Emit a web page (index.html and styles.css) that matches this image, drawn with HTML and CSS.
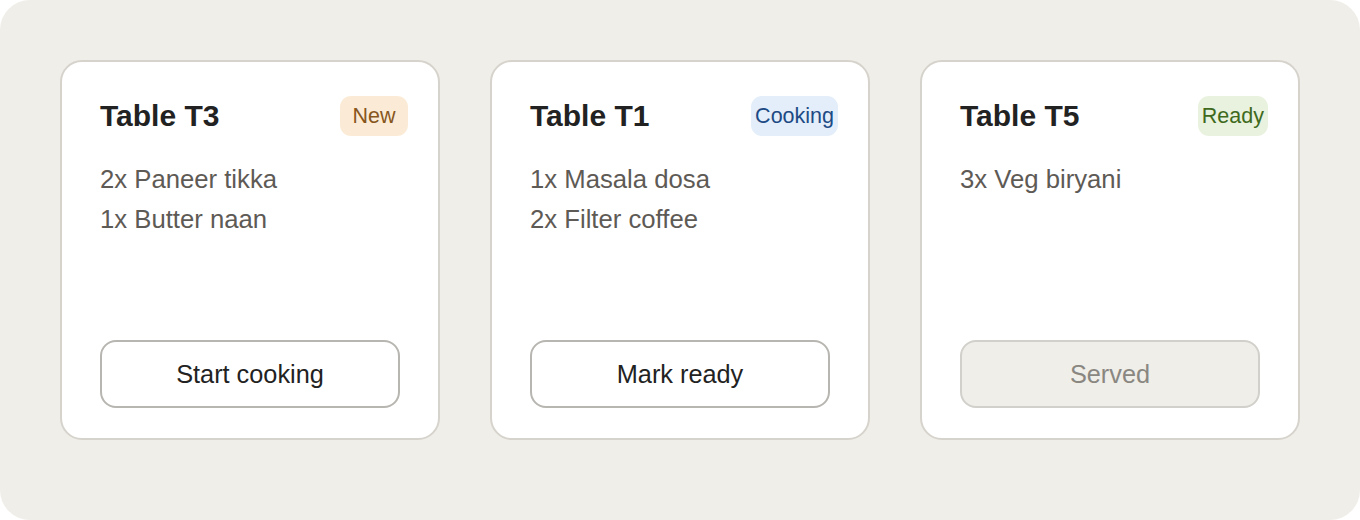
FILE: index.html
```html
<!DOCTYPE html>
<html lang="en">
<head>
<meta charset="utf-8">
<title>Kitchen orders</title>
<link rel="stylesheet" href="styles.css">
</head>
<body>
<main class="board">
  <section class="card">
    <header class="card-head">
      <h2 class="table">Table T3</h2>
      <span class="badge badge-new">New</span>
    </header>
    <ul class="items">
      <li>2x Paneer tikka</li>
      <li>1x Butter naan</li>
    </ul>
    <button class="action">Start cooking</button>
  </section>
  <section class="card">
    <header class="card-head">
      <h2 class="table">Table T1</h2>
      <span class="badge badge-cooking">Cooking</span>
    </header>
    <ul class="items">
      <li>1x Masala dosa</li>
      <li>2x Filter coffee</li>
    </ul>
    <button class="action">Mark ready</button>
  </section>
  <section class="card">
    <header class="card-head">
      <h2 class="table">Table T5</h2>
      <span class="badge badge-ready">Ready</span>
    </header>
    <ul class="items">
      <li>3x Veg biryani</li>
    </ul>
    <button class="action action-done" disabled>Served</button>
  </section>
</main>
</body>
</html>
```
FILE: styles.css
```css
html, body {
  margin: 0;
  padding: 0;
  background: #ffffff;
}
body {
  font-family: "Liberation Sans", Arial, sans-serif;
}
.board {
  box-sizing: border-box;
  width: 1360px;
  height: 520px;
  background: #f0eee9;
  border-radius: 30px;
  padding: 60px;
  display: flex;
  gap: 50px;
}
.card {
  box-sizing: border-box;
  width: 380px;
  height: 380px;
  background: #ffffff;
  border: 2px solid #d6d3cc;
  border-radius: 22px;
  padding: 34px 30px 30px 38px;
  display: flex;
  flex-direction: column;
}
.card-head {
  display: flex;
  justify-content: space-between;
  align-items: center;
  height: 40px;
}
.table {
  margin: 0;
  font-size: 30px;
  font-weight: 700;
  color: #222222;
}
.badge {
  box-sizing: border-box;
  height: 40px;
  line-height: 40px;
  min-width: 68px;
  padding: 0 4px;
  text-align: center;
  border-radius: 11px;
  font-size: 21.5px;
}
.badge-new { background: #fbebd6; color: #87561d; }
.badge-cooking { background: #e3eefa; color: #1d4a84; }
.badge-ready { background: #e9f2de; color: #3f6a1d; }
.items {
  list-style: none;
  margin: 23px 0 0;
  padding: 0;
  font-size: 25.7px;
  line-height: 40px;
  color: #5e5a55;
}
.action {
  margin-top: auto;
  height: 68px;
  width: 300px;
  box-sizing: border-box;
  background: #ffffff;
  border: 2px solid #b8b6b1;
  border-radius: 16px;
  font-family: "Liberation Sans", Arial, sans-serif;
  font-size: 25.3px;
  color: #222222;
  padding: 0;
}
.action-done {
  background: #efeee9;
  border-color: #d2d0ca;
  color: #8a8781;
}
```
